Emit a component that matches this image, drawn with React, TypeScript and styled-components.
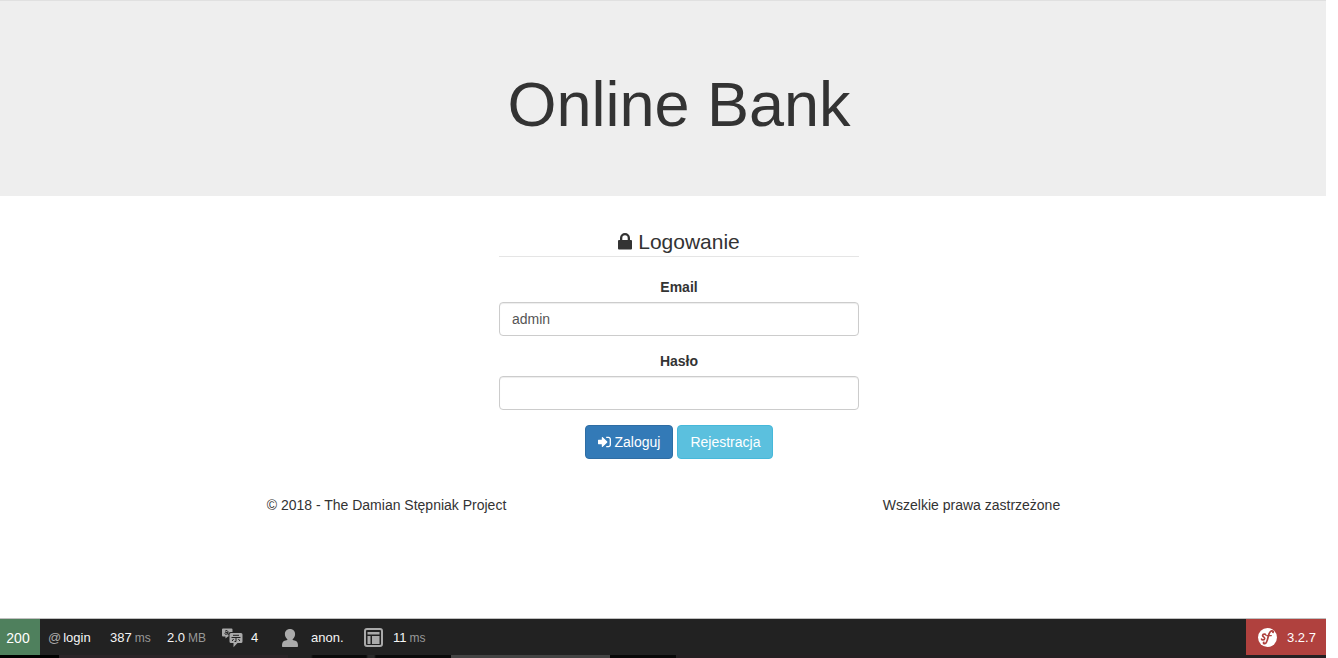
import React from "react";
import styled, { createGlobalStyle } from "styled-components";

const GlobalStyle = createGlobalStyle`
  *, *::before, *::after { box-sizing: border-box; }
  html, body { margin: 0; background: #fff; }
  body {
    font-family: "Liberation Sans", Arial, Helvetica, sans-serif;
    font-size: 14px;
    line-height: 20px;
    color: #333;
  }
`;

const Page = styled.div`
  min-height: 100vh;
  padding-right: 12px;
  display: flex;
  flex-direction: column;
`;

const Hero = styled.header`
  padding: 72px 0 60px 32px;
  background: #eee;
  border-top: 1px solid #e0e0e0;
  text-align: center;
`;

const HeroTitle = styled.h1`
  margin: 0;
  font-size: 63px;
  line-height: 63px;
  font-weight: 400;
`;

const Content = styled.main`
  flex: 1;
  padding: 32px 0 32px 32px;
`;

const LoginForm = styled.form`
  width: 100%;
  max-width: 360px;
  margin: 0 auto;
  text-align: center;
`;

const Legend = styled.h2`
  display: flex;
  justify-content: center;
  align-items: center;
  gap: 6px;
  margin: 0 0 20px;
  padding-bottom: 1px;
  border-bottom: 1px solid #e5e5e5;
  font-size: 21px;
  line-height: 27px;
  font-weight: 400;
`;

const Field = styled.div`
  margin-bottom: 15px;
`;

const Label = styled.label`
  display: block;
  margin-bottom: 5px;
  font-weight: 700;
`;

const Input = styled.input`
  display: block;
  width: 100%;
  height: 34px;
  padding: 6px 12px;
  border: 1px solid #ccc;
  border-radius: 4px;
  background: #fff;
  box-shadow: inset 0 1px 1px rgba(0, 0, 0, 0.075);
  color: #555;
  font: inherit;
`;

const Actions = styled.div`
  display: flex;
  justify-content: center;
  gap: 4px;
`;

const Button = styled.button<{ $tone: "primary" | "info" }>`
  display: flex;
  align-items: center;
  gap: 4px;
  padding: 6px 12px;
  border: 1px solid ${(p) => (p.$tone === "primary" ? "#2e6da4" : "#46b8da")};
  border-radius: 4px;
  background: ${(p) => (p.$tone === "primary" ? "#337ab7" : "#5bc0de")};
  color: #fff;
  font: inherit;
  cursor: pointer;
`;

const Footer = styled.footer`
  display: grid;
  grid-template-columns: 1fr 1fr;
  width: 100%;
  max-width: 1170px;
  margin: 36px auto 0;
  text-align: center;
`;

const DebugBar = styled.nav`
  display: flex;
  align-items: center;
  height: 37px;
  border-top: 1px solid #c0c0c0;
  background: #222;
  color: #f5f5f5;
  font-size: 13px;
  line-height: 36px;
  white-space: nowrap;
`;

const BarItem = styled.a<{ $width: number }>`
  display: flex;
  align-items: center;
  gap: 2px;
  width: ${(p) => p.$width}px;
  height: 36px;
  padding-top: 1px;
  color: inherit;
  text-decoration: none;
`;

const IconSlot = styled.span`
  display: flex;
  width: 27px;
`;

const Status = styled.a`
  width: 40px;
  height: 36px;
  margin-right: 8px;
  padding: 1px 4px 0 0;
  background: #4f805d;
  color: #fff;
  font-size: 14px;
  text-align: center;
  text-decoration: none;
`;

const Muted = styled.span`
  color: #aaa;
`;

const Unit = styled.span`
  margin-left: 1px;
  color: #999;
  font-size: 12px;
`;

const Version = styled.a`
  display: flex;
  align-items: center;
  gap: 10px;
  width: 80px;
  height: 36px;
  margin-left: auto;
  padding: 1px 0 0 12px;
  background: #b0413e;
  color: #fff;
  text-decoration: none;
`;

const BottomEdge = styled.div`
  height: 3px;
  background: linear-gradient(
    to right,
    #000 59px,
    #2a2427 59px 288px,
    #222 288px 311px,
    #0a0a0a 313px 366px,
    #2a2a2a 368px 374px,
    #0a0a0a 376px 451px,
    #444 451px 610px,
    #080808 610px 676px,
    #242022 676px
  );
`;

function LockIcon() {
  return (
    <svg width="14" height="17" viewBox="0 0 14 17" aria-hidden="true">
      <path
        fill="#333"
        fillRule="evenodd"
        d="M2 7V5a5 5 0 0 1 10 0v2h1a1 1 0 0 1 1 1v7.500a1 1 0 0 1-1 1H1a1 1 0 0 1-1-1V8a1 1 0 0 1 1-1zM4.300 7h5.400V5a2.700 2.700 0 0 0-5.400 0z"
      />
    </svg>
  );
}

function SignInIcon() {
  return (
    <svg width="13" height="12" viewBox="0 0 13 12" aria-hidden="true">
      <path
        fill="#fff"
        d="M.5 3.800h3.300V1.600c0-.6.600-.8 1-.4l4.400 4.300c.3.300.3.700 0 1l-4.400 4.300c-.4.400-1 .2-1-.4V8.200H.5c-.3 0-.5-.2-.5-.5V4.300c0-.3.200-.5.500-.5z"
      />
      <path
        d="M8.200 1.400h2.300a1.800 1.800 0 0 1 1.800 1.800v5.600a1.800 1.800 0 0 1-1.800 1.800H8.200"
        fill="none"
        stroke="#fff"
        strokeWidth="1.300"
      />
    </svg>
  );
}

function TranslateIcon() {
  return (
    <svg width="21" height="20" viewBox="0 0 21 20" aria-hidden="true">
      <path
        fill="#aaa"
        d="M1 .5h8.500a1 1 0 0 1 1 1V4H8.500A2 2 0 0 0 6.500 6v2.500H6L3.500 10.500V8.500H1a1 1 0 0 1-1-1v-6a1 1 0 0 1 1-1z"
      />
      <path
        d="M3 3.200Q5.600 1.600 5.900 3.400V6.300l.8.200M5.900 4.300Q2.700 4.200 2.800 5.500 3.200 7.200 5.900 5.600"
        fill="none"
        stroke="#222"
        strokeWidth="1"
      />
      <path
        fill="#aaa"
        d="M9 5h10a1.500 1.500 0 0 1 1.500 1.500v7A1.500 1.500 0 0 1 19 15h-3.500l-4 4.300V15H9a1.500 1.500 0 0 1-1.500-1.500v-7A1.500 1.500 0 0 1 9 5z"
      />
      <path
        d="M11 7.300h6M9.500 9.500h9M14 9.500v4h-1.500M11.600 11l-1.500 2M16.400 11l1.500 2"
        fill="none"
        stroke="#222"
        strokeWidth="1"
      />
    </svg>
  );
}

function UserIcon() {
  return (
    <svg width="16" height="18" viewBox="0 0 16 18" aria-hidden="true">
      <path
        fill="#aaa"
        d="M8 0c3.200 0 5.100 2.200 5.100 5 0 2.300-1 4.200-2.500 5.300v.5c1 .6 2.600.8 3.800 1.500 1.100.7 1.600 2.200 1.600 4.600 0 .7-.4 1.100-1 1.100H1c-.6 0-1-.4-1-1.100 0-2.400.5-3.900 1.600-4.600 1.200-.7 2.800-.9 3.800-1.500v-.5C3.900 9.200 2.900 7.300 2.900 5 2.900 2.200 4.800 0 8 0z"
      />
    </svg>
  );
}

function TemplateIcon() {
  return (
    <svg width="19" height="19" viewBox="0 0 19 19" aria-hidden="true">
      <rect x="1" y="1" width="17" height="17" rx="2" fill="none" stroke="#aaa" strokeWidth="2" />
      <path fill="#aaa" d="M3.500 4h12v2.500h-12zM3.500 8h3v8h-3zM8 8h7.500v8H8z" />
    </svg>
  );
}

function SymfonyIcon() {
  return (
    <svg width="19" height="19" viewBox="0 0 19 19" aria-hidden="true">
      <circle cx="9.500" cy="9.500" r="9.500" fill="#fff" />
      <g fill="none" stroke="#b0413e" strokeLinecap="round">
        <path
          strokeWidth="1.800"
          d="M15 4.300c.4-.9-.2-1.500-1.200-1.400-2 .2-2.800 2.500-3.500 5.300-.8 3.600-1.400 7.300-3.500 7.500-1 .1-1.500-.6-1.100-1.300"
        />
        <path strokeWidth="1.300" d="M8.700 7.600h4.600" />
        <path
          strokeWidth="1.700"
          d="M7.600 6.800c-.3-1-2.700-1-3 .5-.2 1.400 2.300 1.700 2.100 3.300-.3 1.600-2.800 1.700-3.200.4"
        />
      </g>
    </svg>
  );
}

export default function App() {
  return (
    <>
      <GlobalStyle />
      <Page>
        <Hero>
          <HeroTitle>Online Bank</HeroTitle>
        </Hero>
        <Content>
          <LoginForm onSubmit={(e) => e.preventDefault()}>
            <Legend>
              <LockIcon />
              Logowanie
            </Legend>
            <Field>
              <Label htmlFor="email">Email</Label>
              <Input id="email" type="text" defaultValue="admin" />
            </Field>
            <Field>
              <Label htmlFor="password">Hasło</Label>
              <Input id="password" type="password" />
            </Field>
            <Actions>
              <Button type="submit" $tone="primary">
                <SignInIcon />
                Zaloguj
              </Button>
              <Button type="button" $tone="info">
                Rejestracja
              </Button>
            </Actions>
          </LoginForm>
          <Footer>
            <span>© 2018 - The Damian Stępniak Project</span>
            <span>Wszelkie prawa zastrzeżone</span>
          </Footer>
        </Content>
        <DebugBar aria-label="Debug toolbar">
          <Status href="#status">200</Status>
          <BarItem href="#route" $width={62}>
            <Muted>@</Muted>
            login
          </BarItem>
          <BarItem href="#time" $width={57}>
            387 <Unit>ms</Unit>
          </BarItem>
          <BarItem href="#memory" $width={55}>
            2.0 <Unit>MB</Unit>
          </BarItem>
          <BarItem href="#translations" $width={60}>
            <IconSlot>
              <TranslateIcon />
            </IconSlot>
            4
          </BarItem>
          <BarItem href="#user" $width={82}>
            <IconSlot>
              <UserIcon />
            </IconSlot>
            anon.
          </BarItem>
          <BarItem href="#templates" $width={64}>
            <IconSlot>
              <TemplateIcon />
            </IconSlot>
            11 <Unit>ms</Unit>
          </BarItem>
          <Version href="#version">
            <SymfonyIcon />
            3.2.7
          </Version>
        </DebugBar>
        <BottomEdge />
      </Page>
    </>
  );
}
